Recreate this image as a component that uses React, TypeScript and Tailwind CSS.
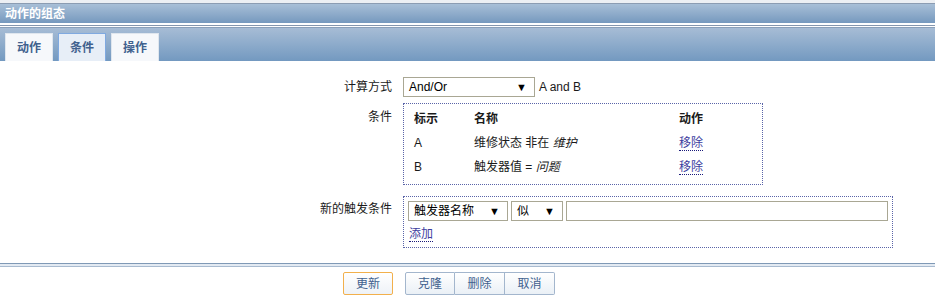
import React from "react";

const FONT = { fontFamily: '"Liberation Sans", "Noto Sans CJK SC", sans-serif' };

function FakeSelect({ value, width }: { value: string; width: string }) {
  return (
    <div
      className={`flex h-[20px] items-center justify-between border border-[#a9a794] bg-white pl-[5px] pr-[7px] text-[12px] text-black ${width}`}
    >
      <span>{value}</span>
      <span className="text-[11px] leading-none">▼</span>
    </div>
  );
}

function LinkText({ children }: { children: React.ReactNode }) {
  return (
    <span className="border-b border-dotted border-[#1a1a7a] text-[#3d3d9e] leading-[14px]">{children}</span>
  );
}

export default function App() {
  const tabs = ["动作", "条件", "操作"];
  const conditions = [
    { tag: "A", name: <>维修状态 非在 <i>维护</i></> },
    { tag: "B", name: <>触发器值 = <i>问题</i></> },
  ];

  return (
    <div className="h-[300px] w-[935px] overflow-hidden bg-white text-[12px] text-[#1a1a1a]" style={FONT}>
      {/* title bar */}
      <div className="h-[3px] bg-[#eceff3]" />
      <div className="flex h-[20px] items-center border-t border-[#8b9cb2] bg-gradient-to-b from-[#a8bfd7] to-[#7699be] pl-[5px] text-[12px] font-bold text-white">
        动作的组态
      </div>
      <div className="h-[2px] bg-white" />
      <div className="h-px bg-[#8496ae]" />
      <div className="h-px bg-white" />

      {/* tabs */}
      <div className="flex h-[34px] items-end gap-[5px] border-t border-[#8aa0ba] bg-gradient-to-b from-[#a6bcd5] via-[#8dabcb] to-[#7399c0] pl-[5px]">
        {tabs.map((t, i) => (
          <div
            key={t}
            className={`flex h-[28px] w-[48px] items-center justify-center font-bold text-[#41618e] ${
              i === 1
                ? "border border-b-0 border-[#7fa9e0] bg-[#e7eef7]"
                : "border border-b-0 border-[#dfe6ee] bg-[#f6f8fb]"
            }`}
          >
            {t}
          </div>
        ))}
      </div>

      {/* form */}
      <div className="flex flex-col pt-[16px]">
        <div className="flex items-center">
          <div className="w-[393px] pr-[1px] text-right">计算方式</div>
          <div className="ml-[10px] flex items-center gap-[4px]">
            <FakeSelect value="And/Or" width="w-[132px]" />
            <span>A and B</span>
          </div>
        </div>

        <div className="mt-[6px] flex">
          <div className="w-[393px] pt-[5px] pr-[1px] text-right">条件</div>
          <div className="ml-[10px] h-[82px] w-[360px] border border-dotted border-[#5a64a8] px-[10px] pt-[3px]">
            <div className="flex h-[24px] items-center font-bold">
              <div className="w-[60px]">标示</div>
              <div className="w-[205px]">名称</div>
              <div>动作</div>
            </div>
            {conditions.map((c) => (
              <div key={c.tag} className="flex h-[24px] items-center">
                <div className="w-[60px]">{c.tag}</div>
                <div className="w-[205px]">{c.name}</div>
                <div>
                  <LinkText>移除</LinkText>
                </div>
              </div>
            ))}
          </div>
        </div>

        <div className="mt-[11px] flex">
          <div className="w-[393px] pt-[4px] pr-[1px] text-right">新的触发条件</div>
          <div className="ml-[10px] h-[52px] w-[490px] border border-dotted border-[#5a64a8] px-[4px] pt-[4px]">
            <div className="flex gap-[3px]">
              <FakeSelect value="触发器名称" width="w-[100px]" />
              <FakeSelect value="似" width="w-[52px]" />
              <div className="h-[20px] flex-1 border border-[#a9a794] bg-white" />
            </div>
            <div className="mt-[4px] pl-[1px]">
              <LinkText>添加</LinkText>
            </div>
          </div>
        </div>
      </div>

      {/* footer */}
      <div className="mt-[15px] h-px bg-[#7f99b6]" />
      <div className="h-[2px] bg-[#e3eaf2]" />
      <div className="h-px bg-[#a9bbd0]" />
      <div className="flex pt-[5px]">
        <div className="ml-[343px] flex h-[23px] w-[50px] items-center justify-center rounded-[2px] border border-[#f2b04c] bg-gradient-to-b from-white to-[#eef2f7] text-[#41618e]">
          更新
        </div>
        <div className="ml-[12px] flex">
          {["克隆", "删除", "取消"].map((b, i) => (
            <div
              key={b}
              className={`flex h-[23px] w-[50px] items-center justify-center border border-[#a3b6cd] bg-gradient-to-b from-white to-[#eaf0f6] text-[#41618e] ${
                i > 0 ? "border-l-0" : "rounded-l-[2px]"
              } ${i === 2 ? "rounded-r-[2px]" : ""}`}
            >
              {b}
            </div>
          ))}
        </div>
      </div>
    </div>
  );
}
